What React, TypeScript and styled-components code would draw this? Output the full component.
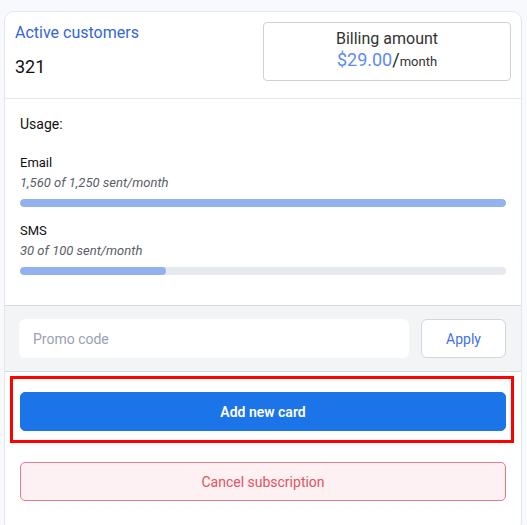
import styled, { createGlobalStyle } from "styled-components";

const GlobalStyle = createGlobalStyle`
    * {
        box-sizing: border-box;
    }
    body {
        margin: 0;
        padding: 11px 5px 0 4px;
        background: #f8f9fc;
        font-family: Roboto, "Liberation Sans", sans-serif;
        color: #111;
    }
`;

const Card = styled.div`
    width: 518px;
    background: #ffffff;
    border: 1px solid #e4e6eb;
    border-radius: 10px;
    overflow: hidden;
`;

const Header = styled.div`
    display: flex;
    justify-content: space-between;
    align-items: flex-start;
    padding: 10px 10px 0 10px;
    height: 87px;
    border-bottom: 1px solid #e6e7ea;
`;

const Stat = styled.div`
    display: flex;
    flex-direction: column;
    gap: 12px;
    padding-top: 1px;
`;

const StatLabel = styled.div`
    font-size: 16px;
    line-height: 20px;
    color: #3565da;
`;

const StatValue = styled.div`
    font-size: 18px;
    line-height: 24px;
    color: #111;
`;

const BillingBox = styled.div`
    width: 248px;
    height: 59px;
    border: 1px solid #cfd1d5;
    border-radius: 4px;
    display: flex;
    flex-direction: column;
    align-items: center;
    justify-content: center;
    gap: 1px;
    padding-bottom: 2px;
`;

const BillingLabel = styled.div`
    font-size: 16px;
    line-height: 19px;
    color: #333;
`;

const Price = styled.div`
    font-size: 18px;
    line-height: 22px;
    color: #222;
`;

const Amount = styled.span`
    color: #5b8cf0;
`;

const Unit = styled.span`
    font-size: 13px;
    color: #333;
`;

const Usage = styled.div`
    padding: 16px 15px 30px 15px;
    border-bottom: 1px solid #d6d8dc;
`;

const UsageTitle = styled.div`
    font-size: 14px;
    line-height: 18px;
    margin-bottom: 20px;
`;

const Meter = styled.div`
    display: flex;
    flex-direction: column;
    & + & {
        margin-top: 14px;
    }
`;

const MeterName = styled.div`
    font-size: 13px;
    line-height: 20px;
    color: #111;
`;

const MeterNote = styled.div`
    font-size: 13px;
    line-height: 20px;
    font-style: italic;
    color: #5a5d66;
    margin-bottom: 6px;
`;

const Track = styled.div`
    height: 8px;
    border-radius: 4px;
    background: #e6e9ee;
    overflow: hidden;
`;

const Fill = styled.div`
    height: 100%;
    border-radius: 4px;
    background: #94b1ef;
`;

const Promo = styled.div`
    display: flex;
    gap: 12px;
    padding: 13px 15px 13px 14px;
    background: #f3f4f6;
    border-bottom: 1px solid #d6d8dc;
`;

const PromoInput = styled.input`
    flex: 1;
    height: 39px;
    border: none;
    border-radius: 6px;
    background: #ffffff;
    padding: 0 14px;
    font-family: inherit;
    font-size: 14px;
    color: #111;
    outline: none;
    &::placeholder {
        color: #9aa1b2;
    }
`;

const ApplyButton = styled.button`
    width: 85px;
    height: 39px;
    border: 1px solid #d3d6dc;
    border-radius: 6px;
    background: #ffffff;
    color: #3d6ff2;
    font-family: inherit;
    font-size: 14px;
    cursor: pointer;
`;

const Actions = styled.div`
    display: flex;
    flex-direction: column;
    padding: 4px 7px 30px 5px;
`;

const Highlight = styled.div`
    border: 3px solid #ff0000;
    padding: 13px 5px 9px 7px;
    margin-bottom: 19px;
`;

const Button = styled.button<{ $variant: "primary" | "danger" }>`
    width: 100%;
    height: 39px;
    border-radius: 5px;
    font-family: inherit;
    font-size: 14px;
    cursor: pointer;
    border: 1px solid ${(p) => (p.$variant === "primary" ? "#1c74e9" : "#e97a90")};
    background: ${(p) => (p.$variant === "primary" ? "#1c74e9" : "#fdf1f4")};
    color: ${(p) => (p.$variant === "primary" ? "#ffffff" : "#e0535f")};
    font-weight: ${(p) => (p.$variant === "primary" ? 600 : 400)};
`;

const CancelWrap = styled.div`
    padding: 0 8px 0 10px;
`;

const meters = [
    { name: "Email", note: "1,560 of 1,250 sent/month", pct: 100 },
    { name: "SMS", note: "30 of 100 sent/month", pct: 30 },
];

function App() {
    return (
        <>
            <GlobalStyle />
            <Card>
                <Header>
                    <Stat>
                        <StatLabel>Active customers</StatLabel>
                        <StatValue>321</StatValue>
                    </Stat>
                    <BillingBox>
                        <BillingLabel>Billing amount</BillingLabel>
                        <Price>
                            <Amount>$29.00</Amount>/<Unit>month</Unit>
                        </Price>
                    </BillingBox>
                </Header>
                <Usage>
                    <UsageTitle>Usage:</UsageTitle>
                    {meters.map((m) => (
                        <Meter key={m.name}>
                            <MeterName>{m.name}</MeterName>
                            <MeterNote>{m.note}</MeterNote>
                            <Track>
                                <Fill style={{ width: `${m.pct}%` }} />
                            </Track>
                        </Meter>
                    ))}
                </Usage>
                <Promo>
                    <PromoInput placeholder="Promo code" />
                    <ApplyButton>Apply</ApplyButton>
                </Promo>
                <Actions>
                    <Highlight>
                        <Button $variant="primary">Add new card</Button>
                    </Highlight>
                    <CancelWrap>
                        <Button $variant="danger">Cancel subscription</Button>
                    </CancelWrap>
                </Actions>
            </Card>
        </>
    );
}

export default App;
